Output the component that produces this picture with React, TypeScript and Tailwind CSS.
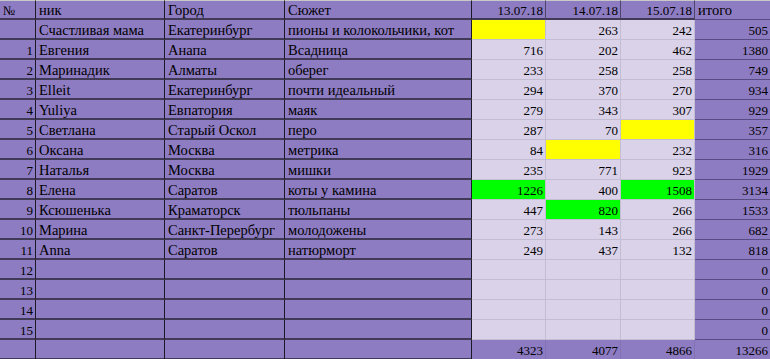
type Kind = "t" | "h" | "d" | "s" | "f";
type Cell = { v: string; k: Kind; r?: boolean; bg?: string };

const cols = "grid-cols-[36px_129px_120px_187px_74px_75px_74px_75px]";

const people: [string, string, string, string, (string | null)[], string][] = [
  ["", "Счастливая мама", "Екатеринбург", "пионы и колокольчики, кот", ["Y", "263", "242"], "505"],
  ["1", "Евгения", "Анапа", "Всадница", ["716", "202", "462"], "1380"],
  ["2", "Маринадик", "Алматы", "оберег", ["233", "258", "258"], "749"],
  ["3", "Elleit", "Екатеринбург", "почти идеальный", ["294", "370", "270"], "934"],
  ["4", "Yuliya", "Евпатория", "маяк", ["279", "343", "307"], "929"],
  ["5", "Светлана", "Старый Оскол", "перо", ["287", "70", "Y"], "357"],
  ["6", "Оксана", "Москва", "метрика", ["84", "Y", "232"], "316"],
  ["7", "Наталья", "Москва", "мишки", ["235", "771", "923"], "1929"],
  ["8", "Елена", "Саратов", "коты у камина", ["G1226", "400", "G1508"], "3134"],
  ["9", "Ксюшенька", "Краматорск", "тюльпаны", ["447", "G820", "266"], "1533"],
  ["10", "Марина", "Санкт-Перербург", "молодожены", ["273", "143", "266"], "682"],
  ["11", "Anna", "Саратов", "натюрморт", ["249", "437", "132"], "818"],
  ["12", "", "", "", ["", "", ""], "0"],
  ["13", "", "", "", ["", "", ""], "0"],
  ["14", "", "", "", ["", "", ""], "0"],
  ["15", "", "", "", ["", "", ""], "0"],
];

function dataCell(raw: string | null): Cell {
  const s = raw ?? "";
  if (s === "Y") return { v: "", k: "d", bg: "bg-[#ffff00]" };
  if (s.startsWith("G")) return { v: s.slice(1), k: "d", r: true, bg: "bg-[#00ff00]" };
  return { v: s, k: "d", r: true, bg: "bg-[#d9d2e9]" };
}

const rows: Cell[][] = [
  [
    { v: "№", k: "t" },
    { v: "ник", k: "t" },
    { v: "Город", k: "t" },
    { v: "Сюжет", k: "t" },
    { v: "13.07.18", k: "h", r: true },
    { v: "14.07.18", k: "h", r: true },
    { v: "15.07.18", k: "h", r: true },
    { v: "итого", k: "s" },
  ],
  ...people.map(([n, nick, city, plot, days, sum]) => [
    { v: n, k: "t" as Kind, r: true },
    { v: nick, k: "t" as Kind },
    { v: city, k: "t" as Kind },
    { v: plot, k: "t" as Kind },
    ...days.map(dataCell),
    { v: sum, k: "s" as Kind, r: true },
  ]),
  [
    { v: "", k: "t" },
    { v: "", k: "t" },
    { v: "", k: "t" },
    { v: "", k: "t" },
    { v: "4323", k: "f", r: true },
    { v: "4077", k: "f", r: true },
    { v: "4866", k: "f", r: true },
    { v: "13266", k: "s", r: true },
  ],
];

// purple text columns, date headers, light data cells, sums, footer totals
const kindClass: Record<Kind, string> = {
  t: "bg-[#8e7cc3] border-r border-r-[#1c1a24] border-b-2 border-b-[#403a56] pb-[1px]",
  h: "bg-[#8e7cc3] border-r border-r-[#4d466a] border-b-2 border-b-[#403a56] pb-[1px]",
  d: "border-r border-r-[#c3bdd3] border-b border-b-[#c3bdd3] pb-[2px]",
  s: "bg-[#8e7cc3] border-b border-b-[#574d84] pb-[2px]",
  f: "bg-[#8e7cc3] border-r border-r-[#8274b4] border-b border-b-[#2a2540] pb-[2px]",
};

export default function App() {
  return (
    <div className="w-[770px] h-[359px] overflow-hidden bg-white font-['Liberation_Serif',serif] text-black">
      <div className={`grid ${cols} auto-rows-[20px]`}>
        {rows.map((row, ri) =>
          row.map((c, ci) => (
            <div
              key={`${ri}-${ci}`}
              className={
                "flex items-end leading-none whitespace-nowrap overflow-hidden " +
                kindClass[c.k] +
                " " +
                (c.bg ?? "") +
                " " +
                ((ci >= 1 && ci <= 3) || (ri === 0 && ci === 7) ? "text-[14.5px]" : "text-[13px]") +
                " " +
                (c.r ? "justify-end pr-[2px]" : "justify-start pl-[3px]") +
                (ri === 0 ? " border-t border-t-[#c8c8c8]" : "")
              }
            >
              {c.v}
            </div>
          ))
        )}
      </div>
    </div>
  );
}
